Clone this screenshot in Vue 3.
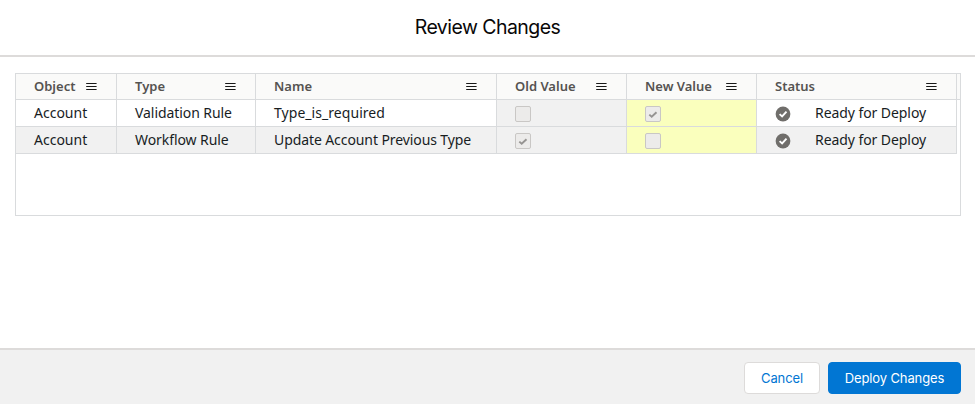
<script setup>
const columns = [
  { key: 'object', label: 'Object' },
  { key: 'type', label: 'Type' },
  { key: 'name', label: 'Name' },
  { key: 'old', label: 'Old Value' },
  { key: 'new', label: 'New Value' },
  { key: 'status', label: 'Status' },
]

const rows = [
  { object: 'Account', type: 'Validation Rule', name: 'Type_is_required', old: false, new: true, status: 'Ready for Deploy' },
  { object: 'Account', type: 'Workflow Rule', name: 'Update Account Previous Type', old: true, new: false, status: 'Ready for Deploy' },
]
</script>

<template>
  <section class="modal">
    <header class="modal-header">
      <h2 class="title">Review Changes</h2>
    </header>
    <main class="modal-body">
      <div class="grid">
        <div class="row head">
          <div v-for="c in columns" :key="c.key" class="cell">
            <span class="label">{{ c.label }}</span>
            <svg class="menu" width="11" height="9" viewBox="0 0 11 9">
              <path d="M0.2 1.5h10.4M0.2 4.5h10.4M0.2 7.5h10.4" />
            </svg>
          </div>
        </div>
        <div v-for="(r, i) in rows" :key="i" class="row data">
          <div v-for="c in columns" :key="c.key" class="cell" :class="c.key">
            <span v-if="c.key === 'old' || c.key === 'new'" class="check">
              <svg v-if="r[c.key]" width="14" height="14" viewBox="0 0 14 14">
                <path d="M3.3 7.6L5.7 9.8L10.5 5.2" />
              </svg>
            </span>
            <template v-else-if="c.key === 'status'">
              <svg class="done" width="16" height="16" viewBox="0 0 16 16">
                <circle cx="8" cy="8" r="7.4" />
                <path d="M4.6 8.1L7.1 10.4L11.5 5.6" />
              </svg>
              <span class="text">{{ r.status }}</span>
            </template>
            <span v-else class="text" :class="'text-' + c.key">{{ r[c.key] }}</span>
          </div>
        </div>
      </div>
    </main>
    <footer class="modal-footer">
      <button class="btn">Cancel</button>
      <button class="btn brand">Deploy Changes</button>
    </footer>
  </section>
</template>

<style>
body {
  margin: 0;
  background: #fff;
}
</style>

<style scoped>
.modal {
  display: flex;
  flex-direction: column;
  height: 404px;
  box-sizing: border-box;
  font-family: Inter, "Liberation Sans", sans-serif;
}
.modal-header {
  height: 57px;
  box-sizing: border-box;
  border-bottom: 2px solid #dddbda;
  text-align: center;
}
.title {
  margin: 0;
  font-size: 19.5px;
  font-weight: 400;
  line-height: 54px;
  letter-spacing: -0.55px;
  color: #080707;
}
.modal-body {
  flex: 1;
  padding: 16px 14px 0 15px;
}
.grid {
  height: 143px;
  box-sizing: border-box;
  border: 1px solid #d9dbdd;
  font-family: "Noto Sans", sans-serif;
}
.row {
  display: grid;
  grid-template-columns: 101px 139px 241px 130px 130px 200px;
  box-sizing: border-box;
  border-bottom: 1px solid #d9dbdd;
}
.head {
  height: 26px;
  background: #fafaf9;
}
.data {
  width: 941px;
  height: 27px;
}
.data:nth-child(odd) {
  background: #f1f1f1;
}
.cell {
  display: flex;
  align-items: center;
  box-sizing: border-box;
  padding-left: 18px;
  border-right: 1px solid #d9dbdd;
  white-space: nowrap;
}
.head .cell {
  justify-content: space-between;
  padding-right: 19px;
}
.label {
  font-size: 13px;
  font-weight: 600;
  line-height: 25px;
  color: #555351;
}
.menu {
  fill: none;
  stroke: #181818;
  stroke-width: 1;
}
.text {
  font-size: 14px;
  line-height: 26px;
  letter-spacing: -0.07px;
  color: #181d1f;
}
.text-object {
  letter-spacing: 0;
}
.text-name {
  letter-spacing: -0.09px;
}
.data:nth-child(2) .text-name {
  letter-spacing: 0.05px;
}
.old {
  background: #f1f1f1;
}
.new {
  background: #faffbd;
}
.check {
  width: 16px;
  height: 16px;
  margin-top: 2px;
  box-sizing: border-box;
  border: 1px solid #c9c7c5;
  border-radius: 2px;
  background: #ecebea;
}
.check svg {
  display: block;
  fill: none;
  stroke: #969492;
  stroke-width: 1.9;
}
.done {
  margin: 2px 24px 0 0;
  fill: #706e6b;
}
.done path {
  fill: none;
  stroke: #fff;
  stroke-width: 1.9;
}
.modal-footer {
  display: flex;
  justify-content: flex-end;
  gap: 8px;
  height: 56px;
  box-sizing: border-box;
  padding: 12px 14px 0 0;
  border-top: 2px solid #dddbda;
  background: #f1f1f1;
}
.btn {
  width: 76px;
  height: 32px;
  box-sizing: border-box;
  padding: 0;
  border: 1px solid #dddbda;
  border-radius: 4px;
  background: #fff;
  color: #0176d3;
  font: 400 13px/31px Inter, "Liberation Sans", sans-serif;
  letter-spacing: -0.12px;
}
.brand {
  width: 133px;
  border-color: #0176d3;
  background: #0176d3;
  color: #fff;
}
</style>
